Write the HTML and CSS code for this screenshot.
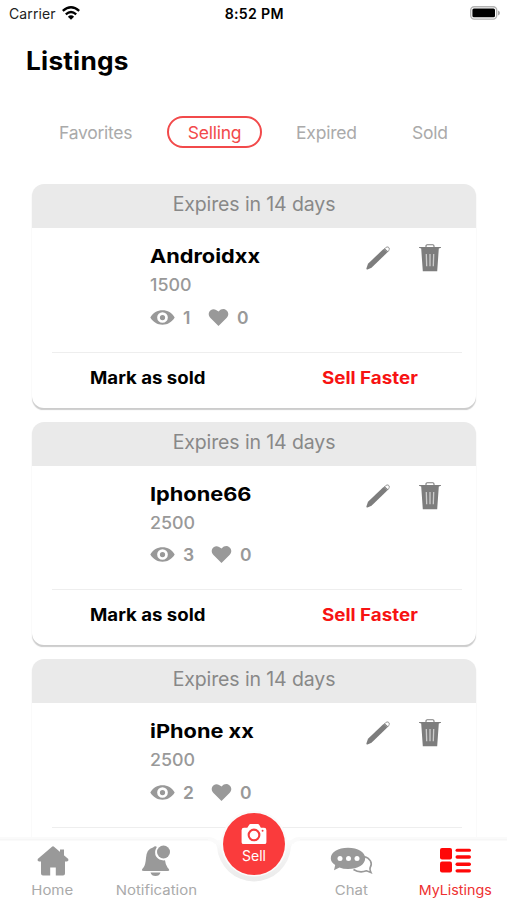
FILE: index.html
```html
<!DOCTYPE html>
<html lang="en">
<head>
<meta charset="utf-8">
<title>Listings</title>
<link rel="stylesheet" href="styles.css">
</head>
<body>
<svg class="defs" aria-hidden="true">
  <symbol id="eye" viewBox="0 0 26 16"><path fill="currentColor" fill-rule="evenodd" d="M0 8C3 3 7.500 .3 13 .3S23 3 26 8C23 13 18.500 15.700 13 15.700S3 13 0 8ZM13 2.300a5.700 5.700 0 1 0 0 11.400a5.700 5.700 0 1 0 0-11.400ZM13 5.200a2.800 2.800 0 1 1 0 5.600a2.800 2.800 0 1 1 0-5.600Z"/></symbol>
  <symbol id="heart" viewBox="0 0 21 18"><path fill="currentColor" d="M10.500 18L2 9.600C-.7 6.800-.3 3 2.200 1.200C4.700-.7 8 .1 10.500 2.700C13-.1 16.300-.7 18.800 1.200C21.300 3 21.700 6.800 19 9.600Z"/></symbol>
  <symbol id="pencil" viewBox="0 0 24 24"><path fill="currentColor" d="M.4 22.600L2 17.700L17.500 3L21.300 6.500L5.500 21.700L1.500 23.500Q.2 23.700 .4 22.600Z"/><path d="M18.200 3.200Q20 .5 22 .9Q23.800 1.600 23.200 3.600Q22.800 4.900 21.500 6" fill="#fff" stroke="#999" stroke-width="1"/><path d="M18.200 2.800L21.700 6" stroke="currentColor" stroke-width="1.300"/></symbol>
  <symbol id="trash" viewBox="0 0 22 28"><path d="M7 3.200V1.900Q7 .8 8.200.8H13.800Q15 .8 15 1.900V3.200" fill="none" stroke="currentColor" stroke-width="1.100"/><path fill="currentColor" d="M0 3H22V3.700L19.800 4.600L18.200 27.300H3.800L2.200 4.600L0 3.700Z"/><path d="M7.300 10L7.700 22.300M11 10V22.300M14.700 10L14.300 22.300" stroke="#ccc" stroke-width="1.300"/></symbol>
</svg>
<div class="screen">
  <header class="status">
    <div class="carrier"><span class="carrier-name">Carrier</span>
      <svg class="wifi" viewBox="0 0 18 14"><g fill="none" stroke="#000" stroke-width="2.300"><path d="M.8 4.900Q9-2.300 17.200 4.900"/><path d="M3.800 8.300Q9 3.700 14.200 8.300"/></g><path d="M9 13.700L5.900 10.700Q9 8 12.100 10.700Z"/></svg>
    </div>
    <div class="time">8:52 PM</div>
    <svg class="battery" viewBox="0 0 30 14"><rect x=".7" y=".7" width="26" height="12.400" rx="3.500" fill="#fff" stroke="#b3b3b3" stroke-width="1.400"/><rect x="2.400" y="2.500" width="22.600" height="8.800" rx="1.500"/><path d="M28 4.600Q30 5.200 30 7T28 9.400Z" fill="#aaa"/></svg>
  </header>
  <h1 class="title">Listings</h1>
  <nav class="filters">
    <span class="filter favorites">Favorites</span><span class="filter active">Selling</span><span class="filter expired">Expired</span><span class="filter sold">Sold</span>
  </nav>
  <main class="list">
    <article class="card">
      <div class="expiry">Expires in 14 days</div>
      <div class="details">
        <div class="info"><h2 class="name">Androidxx</h2><div class="price">1500</div>
          <div class="stats"><svg class="eye"><use href="#eye"/></svg><span class="views one">1</span><svg class="heart"><use href="#heart"/></svg><span>0</span></div></div>
        <div class="tools"><svg class="pencil"><use href="#pencil"/></svg><svg class="trash"><use href="#trash"/></svg></div>
      </div>
      <div class="actions"><span class="mark">Mark as sold</span><span class="faster">Sell Faster</span></div>
    </article>
    <article class="card">
      <div class="expiry">Expires in 14 days</div>
      <div class="details">
        <div class="info"><h2 class="name">Iphone66</h2><div class="price">2500</div>
          <div class="stats"><svg class="eye"><use href="#eye"/></svg><span class="views">3</span><svg class="heart"><use href="#heart"/></svg><span>0</span></div></div>
        <div class="tools"><svg class="pencil"><use href="#pencil"/></svg><svg class="trash"><use href="#trash"/></svg></div>
      </div>
      <div class="actions"><span class="mark">Mark as sold</span><span class="faster">Sell Faster</span></div>
    </article>
    <article class="card">
      <div class="expiry">Expires in 14 days</div>
      <div class="details">
        <div class="info"><h2 class="name">iPhone xx</h2><div class="price">2500</div>
          <div class="stats"><svg class="eye"><use href="#eye"/></svg><span class="views">2</span><svg class="heart"><use href="#heart"/></svg><span>0</span></div></div>
        <div class="tools"><svg class="pencil"><use href="#pencil"/></svg><svg class="trash"><use href="#trash"/></svg></div>
      </div>
      <div class="actions"></div>
    </article>
  </main>
  <nav class="tabbar">
    <svg class="bar-shape" viewBox="0 0 507 92">
      <defs><linearGradient id="notch" x1="0" y1="0" x2="0" y2="1"><stop offset="0" stop-color="#fcfcfc"/><stop offset=".35" stop-color="#f3f3f3"/><stop offset="1" stop-color="#ebebeb"/></linearGradient></defs>
      <path d="M0 32H507V92H0Z" fill="#fff"/>
      <path d="M208 32Q215 32 217 39A37.100 37.100 0 0 0 291 39Q293 32 300 32Z" fill="url(#notch)"/>
      <path d="M0 31H208Q214 31 216.500 35M291.500 35Q294 31 300 31H507" fill="none" stroke="#fafafa" stroke-width="4"/>
      <path d="M0 31.500H208M300 31.500H507" stroke="#f6f6f6"/>
      <circle cx="254" cy="35.500" r="33" fill="#fbfbfb"/>
    </svg>
    <div class="tab home"><svg class="tab-icon" viewBox="0 0 32 30"><path fill="currentColor" d="M14.700 .9Q16 -.2 17.300 .9L31.300 13Q32 15.200 30 15.500H28V27.500Q28 29.500 26 29.500H18.800V21.500H13.200V29.500H6Q4 29.500 4 27.500V15.500H2Q0 15.200 .7 13ZM23 3.500H27V10.500H23Z"/></svg><span>Home</span></div>
    <div class="tab notification"><svg class="tab-icon" viewBox="0 0 32 32"><path fill="currentColor" d="M13 2.500Q15.500 .5 16.800 2Q13.600 7.500 16.300 11.800Q19.300 15.900 25 15.300Q25.500 20 27.500 22.500Q31 26 27.500 26H4Q0 26 3.500 22.500Q5.500 20 6 13Q6.500 4 13 2.500ZM10.500 27.500H20.500Q19.500 31 15.500 31Q11.500 31 10.500 27.500Z"/><circle cx="23.500" cy="7" r="6.500" fill="currentColor"/></svg><span>Notification</span></div>
    <button class="sell"><svg class="camera" viewBox="0 0 26 22"><path fill="#fff" d="M2.500 4H6L8 .8Q8.400 0 9.300 0H17Q18 0 18.400 .8L20.200 4H23.500Q26 4 26 6.500V19Q26 21 24 21H2Q0 21 0 19V6.500Q0 4 2.500 4Z"/><circle cx="13" cy="11.500" r="5.600" fill="none" stroke="#f73d3e" stroke-width="2.200"/><circle cx="22" cy="7" r="1" fill="#f73d3e"/></svg><span>Sell</span></button>
    <div class="tab chat"><svg class="tab-icon" viewBox="0 0 44 28"><path d="M34 9.500C40 11 43 16 40.200 20.500Q39.400 22 41 25.500L36.500 23.800C32 25.500 27 24.800 23.500 22.500" fill="none" stroke="currentColor" stroke-width="1.600"/><path fill="currentColor" d="M18 .8C28 .8 35.200 5 35.200 11.300S28 22 18 22Q13 22 9.500 20.500L4 23.200L5.200 18Q.8 15.500 .8 11.300C.8 5 8 .8 18 .8Z"/><g fill="#fff"><circle cx="10" cy="11.500" r="2.500"/><circle cx="18.500" cy="11.500" r="2.500"/><circle cx="27" cy="11.500" r="2.500"/></g></svg><span>Chat</span></div>
    <div class="tab mylistings"><svg class="tab-icon" viewBox="0 0 31 25"><g fill="currentColor"><rect width="12" height="11.500" rx="2"/><rect y="13.500" width="12" height="11" rx="2"/><rect x="15.500" y=".8" width="15.500" height="3" rx="1.500"/><rect x="15.500" y="7.300" width="15.500" height="3.500" rx="1.700"/><rect x="15.500" y="14.500" width="15.500" height="3.500" rx="1.700"/><rect x="15.500" y="21.200" width="15.500" height="3.200" rx="1.600"/></g></svg><span>MyListings</span></div>
  </nav>
</div>
</body>
</html>
```
FILE: styles.css
```css
* { box-sizing: border-box; }
body { margin: 0; background: #fff; font-family: Inter, sans-serif; }
svg { display: block; flex: none; overflow: visible; }
.defs { display: none; }
.screen { position: relative; width: 507px; height: 900px; overflow: hidden; }
.status { display: grid; grid-template-columns: 1fr auto 1fr; align-items: center; height: 27px; padding: 0 7px 0 9px; }
.carrier { display: flex; align-items: center; gap: 6px; }
.carrier-name { font-size: 14px; line-height: 20px; letter-spacing: .12px; color: #222; }
.wifi { width: 18px; height: 14px; margin-top: -1px; }
.time { font-size: 14px; font-weight: 600; letter-spacing: .3px; transform: scaleX(1.01); }
.battery { width: 30px; height: 14px; justify-self: end; margin-top: -1px; }
.title { margin: 18px 0 0 26px; font-size: 25px; line-height: 33px; font-weight: 700; letter-spacing: .2px; }
.title, .name, .price, .mark, .faster { transform-origin: 0 50%; transform: scaleX(1.05); }
.filters { display: flex; height: 32px; margin-top: 38px; padding-left: 59px; align-items: flex-start; font-size: 17.500px; letter-spacing: -.25px; color: #aaa; }
.filter { line-height: 33px; white-space: nowrap; }
.favorites { width: 108px; }
.active { width: 95px; height: 32px; line-height: 29px; text-align: center; border: 2px solid #f24a4b; border-radius: 16px; color: #f24a4b; }
.expired { margin-left: 34px; width: 116px; letter-spacing: -.2px; }
.list { display: flex; flex-direction: column; gap: 14px; padding: 36px 31px 0 32px; }
.card { flex: none; height: 223.500px; border-radius: 12px; background: #fff; box-shadow: 0 2px 1px -.5px #ccc; overflow: hidden; }
.expiry { height: 44px; background: #eaeaea; color: #888; text-align: center; font-size: 19.500px; line-height: 41px; letter-spacing: -.12px; }
.details { display: flex; justify-content: space-between; height: 123.500px; padding: 14px 35px 0 118px; }
.name { width: max-content; margin: 0; font-size: 19px; line-height: 29px; font-weight: 700; transform: scaleX(1.145); }
.price { width: max-content; margin-top: 1px; font-size: 17px; line-height: 26px; font-weight: 500; color: #999; }
.stats { display: flex; align-items: center; height: 26px; margin-top: 6px; color: #999; font-size: 17.500px; font-weight: 600; }
.eye { width: 25px; height: 15px; margin-right: 8px; }
.views { width: 28px; }
.views.one { width: 25px; }
.heart { width: 21px; height: 17px; margin-right: 8px; }
.tools { display: flex; align-items: flex-start; gap: 29px; color: #7d7d7d; }
.pencil { width: 24px; height: 24px; margin-top: 4px; }
.trash { width: 22px; height: 28px; margin-top: 2px; }
.actions { display: grid; grid-template-columns: 1fr 1fr; margin: 0 14px 0 20px; border-top: 1px solid #eee; font-size: 17px; line-height: 50px; font-weight: 700; }
.mark { margin-left: 38px; transform: scaleX(1.095); }
.faster { margin-left: 65px; color: #f71313; transform: scaleX(1.105); }
.tabbar { position: absolute; left: 0; bottom: 0; width: 507px; height: 92px; display: grid; grid-template-columns: 104px 104px 92px 103px 104px; }
.bar-shape { position: absolute; inset: 0; width: 507px; height: 92px; }
.tab { position: relative; display: flex; flex-direction: column; align-items: center; justify-content: flex-end; padding-bottom: 1px; color: #999; font-size: 13px; line-height: 18px; }
.tab span { color: #aaa; white-space: nowrap; transform: scaleX(1.15); }
.home .tab-icon { width: 32px; height: 30px; margin: 0 0 5px 2px; }
.notification .tab-icon { width: 32px; height: 32px; margin-bottom: 4px; }
.chat .tab-icon { width: 44px; height: 28px; margin-bottom: 6px; }
.mylistings { color: #ff0808; }
.mylistings .tab-icon { width: 31px; height: 25px; margin-bottom: 8px; }
.tab.mylistings span { color: #ee3030; transform: scaleX(1.1); }
.sell { position: relative; justify-self: center; display: flex; flex-direction: column; align-items: center; width: 62px; height: 62px; margin: 4.500px 0 0; padding: 11px 0 0; border: 0; border-radius: 50%; background: #fa3b3c; color: #fff; font: 14px/18px Inter, sans-serif; }
.camera { width: 26px; height: 21px; margin-bottom: 2px; }
```
